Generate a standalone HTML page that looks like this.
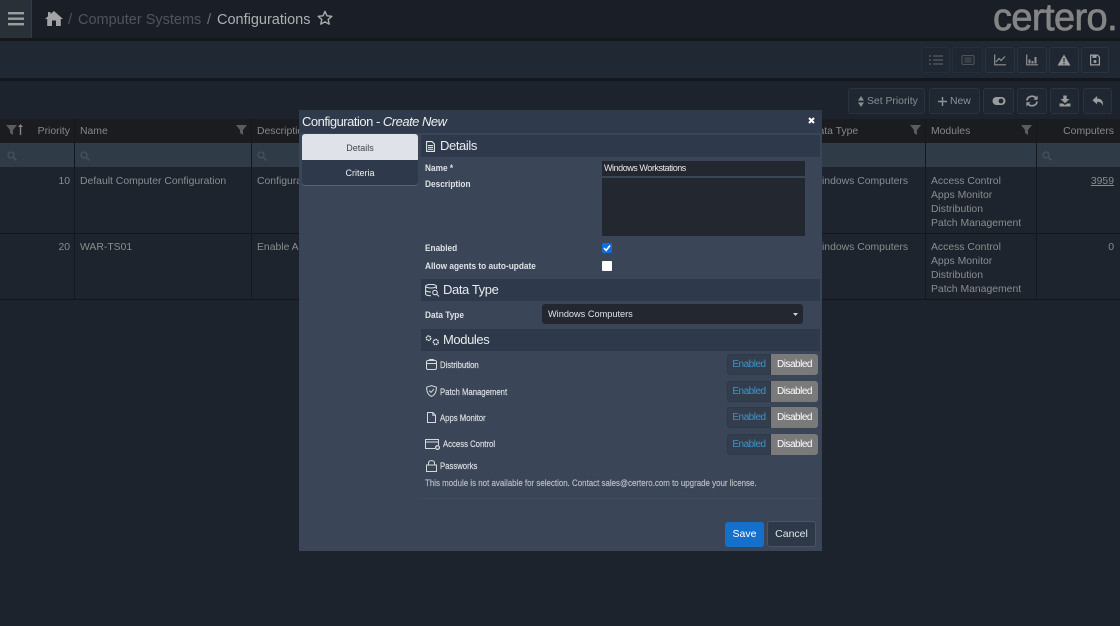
<!DOCTYPE html>
<html><head><meta charset="utf-8"><style>
html,body{margin:0;padding:0}
body{width:1120px;height:626px;overflow:hidden;background:#1c232c;font-family:"Liberation Sans",sans-serif;position:relative;color:#8a8d90}
.a,.t{position:absolute}
.t{white-space:nowrap;line-height:14px;font-size:10.4px}
.btn{position:absolute;box-sizing:border-box;border:1px solid #2a333e;border-radius:3px;background:#1f2832;height:26px}
.btn svg{position:absolute;left:50%;top:50%;transform:translate(-50%,-50%)}
.l{position:absolute;background:#14181d}
.lab{position:absolute;white-space:nowrap;font:bold 9px/12px "Liberation Sans",sans-serif;color:#dfe2e6;transform:scaleX(.92);transform-origin:0 0}
.mod{position:absolute;white-space:nowrap;font:9px/12px "Liberation Sans",sans-serif;color:#d8dce0;transform:scaleX(.86);transform-origin:0 0;-webkit-text-stroke:.2px #d8dce0}
.sec{position:absolute;left:421px;width:399px;height:22px;background:#2e3a4b}
.st{position:absolute;font-size:13px;line-height:20px;color:#e8eaec;white-space:nowrap;letter-spacing:-.4px}
.tg{position:absolute;left:727px;width:91px;height:21px;box-sizing:border-box}
.tg b{position:absolute;left:0;top:0;width:44px;height:21px;box-sizing:border-box;background:#323e4e;border:1px solid #2d3848;border-radius:3px 0 0 3px;color:#3f93c8;font:10px/19px "Liberation Sans",sans-serif;letter-spacing:-.5px;text-align:center}
.tg i{position:absolute;left:44px;top:0;width:47px;height:21px;background:#7a7a7a;border-radius:0 3px 3px 0;color:#fff;font:normal 10px/21px "Liberation Sans",sans-serif;letter-spacing:-.5px;text-align:center}
</style></head><body>
<!-- top bar -->
<div class="a" style="left:0;top:0;width:1120px;height:38px;background:#1a1f27"></div>
<div class="a" style="left:0;top:38px;width:1120px;height:3px;background:#14171c"></div>
<div class="a" style="left:0;top:0;width:32px;height:38px;background:#2a3038;border-right:1px solid #333a43;box-sizing:border-box"></div>
<svg class="a" style="left:8px;top:12px" width="16" height="14"><rect y="0" width="16" height="2.4" fill="#9b9d9f"/><rect y="5.5" width="16" height="2.4" fill="#9b9d9f"/><rect y="11" width="16" height="2.4" fill="#9b9d9f"/></svg>
<svg class="a" style="left:45px;top:11px" width="18" height="15" viewBox="0 0 18 15"><path d="M9 0 L18 8 L15.8 8 L15.8 15 L11 15 L11 9.5 L7 9.5 L7 15 L2.2 15 L2.2 8 L0 8 L3 5.2 L3 1 L5.5 1 L5.5 3 Z" fill="#a2a3a4"/></svg>
<div class="t" style="left:68px;top:12px;font-size:15px;line-height:16px;color:#4f545b">/</div>
<div class="t" style="left:78px;top:12px;font-size:14.5px;line-height:16px;color:#4f555c">Computer Systems</div>
<div class="t" style="left:207px;top:12px;font-size:15px;line-height:16px;color:#6b6f74">/</div>
<div class="t" style="left:217px;top:12px;font-size:14.5px;line-height:16px;color:#adb0b3">Configurations</div>
<svg class="a" style="left:317px;top:10px" width="16" height="16" viewBox="0 0 16 16"><path d="M8 1.4 L10 5.8 L14.8 6.3 L11.2 9.5 L12.2 14.2 L8 11.8 L3.8 14.2 L4.8 9.5 L1.2 6.3 L6 5.8 Z" fill="none" stroke="#a9abad" stroke-width="1.4" stroke-linejoin="round"/></svg>
<div class="t" style="left:993px;top:0;font-size:38px;line-height:37px;color:#848484;letter-spacing:-.6px;font-weight:400;-webkit-text-stroke:.7px #848484">certero.</div>

<!-- toolbar 1 -->
<div class="a" style="left:0;top:41px;width:1120px;height:37px;background:#1f2833"></div>
<div class="a" style="left:0;top:78px;width:1120px;height:3px;background:#14181d"></div>
<div class="btn" style="left:921px;top:47px;width:29px;opacity:.55"><svg width="14" height="10"><path d="M0 1h2M4 1h10M0 5h2M4 5h10M0 9h2M4 9h10" stroke="#777" stroke-width="1.6"/></svg></div>
<div class="btn" style="left:952px;top:47px;width:31px;opacity:.55"><svg width="13" height="10"><rect x=".5" y=".5" width="12" height="9" rx="1.5" fill="none" stroke="#777"/><path d="M3 3h7M3 5h7M3 7h7" stroke="#777"/></svg></div>
<div class="btn" style="left:985px;top:47px;width:30px"><svg width="12" height="11"><path d="M.7 0V10.3H12" fill="none" stroke="#8e8f90" stroke-width="1.2"/><path d="M2 7.5L5 4L7 6L11 2" fill="none" stroke="#8e8f90" stroke-width="1.2"/></svg></div>
<div class="btn" style="left:1017px;top:47px;width:30px"><svg width="12" height="11"><path d="M.7 0V10.3H12" fill="none" stroke="#8e8f90" stroke-width="1.2"/><path d="M2.5 9V5h2v4zM5.5 9V6.5h2V9zM8.5 9V2.5h2V9z" fill="#8e8f90"/></svg></div>
<div class="btn" style="left:1049px;top:47px;width:30px"><svg width="13" height="11"><path d="M6.5 0L13 11H0Z" fill="#9c9d9e"/><path d="M6.5 3.5V7.5M6.5 8.5V10" stroke="#1f2832" stroke-width="1.1"/></svg></div>
<div class="btn" style="left:1081px;top:47px;width:28px"><svg width="10" height="11"><path d="M.6.6H7.5L9.4 2.5V10.4H.6Z" fill="none" stroke="#a0a1a2" stroke-width="1.2"/><rect x="2.5" y="1" width="4" height="2.4" fill="#a0a1a2"/><circle cx="5" cy="7" r="1.5" fill="#a0a1a2"/></svg></div>

<!-- toolbar 2 -->
<div class="btn" style="left:848px;top:88px;width:77px;height:26px"></div>
<svg class="a" style="left:858px;top:96px" width="6" height="11"><path d="M3 0L6 4.6H0ZM3 11L6 6.4H0Z" fill="#8b8d90"/></svg>
<div class="t" style="left:867px;top:95px;color:#8b8d90">Set Priority</div>
<div class="btn" style="left:929px;top:88px;width:51px"></div>
<svg class="a" style="left:938px;top:97px" width="9" height="9"><path d="M4.5 0V9M0 4.5H9" stroke="#8f9194" stroke-width="1.4"/></svg>
<div class="t" style="left:950px;top:95px;color:#8f9194">New</div>
<div class="btn" style="left:983px;top:88px;width:31px"><svg width="13" height="8"><rect width="13" height="8" rx="4" fill="#9b9c9d"/><circle cx="8.5" cy="4" r="2.4" fill="#1f2832"/></svg></div>
<div class="btn" style="left:1017px;top:88px;width:30px"><svg width="12" height="11"><path d="M1 5A5 4.5 0 0 1 10 2.5M11 6A5 4.5 0 0 1 2 8.5" fill="none" stroke="#9b9c9d" stroke-width="1.7"/><path d="M11.6 0V4.2H7.5ZM.4 11V6.8H4.5Z" fill="#9b9c9d"/></svg></div>
<div class="btn" style="left:1050px;top:88px;width:29px"><svg width="11" height="11"><path d="M3.8 0H7.2V3.5H10L5.5 7.8L1 3.5H3.8ZM0 8H3.4L5.5 9.6L7.6 8H11V11H0Z" fill="#9b9c9d"/></svg></div>
<div class="btn" style="left:1083px;top:88px;width:29px"><svg width="11" height="10"><path d="M4.6 0V2.5C8.5 2.5 11 4.5 10.5 10C9.5 7 8 5.9 4.6 5.9V8.4L0 4.2Z" fill="#9b9c9d"/></svg></div>

<!-- table -->
<div class="a" style="left:0;top:119px;width:1120px;height:24px;background:#1a1c20"></div>
<div class="a" style="left:0;top:143px;width:1120px;height:24px;background:#303b48"></div>
<div class="a" style="left:0;top:167px;width:1120px;height:133px;background:#1d242d"></div>
<div class="l" style="left:0;top:233px;width:1120px;height:1px;background:#12161b"></div>
<div class="l" style="left:0;top:299px;width:1120px;height:1px;background:#12161b"></div>
<div class="l" style="left:74px;top:119px;width:1px;height:181px"></div>
<div class="l" style="left:251px;top:119px;width:1px;height:181px"></div>
<div class="l" style="left:925px;top:119px;width:1px;height:181px"></div>
<div class="l" style="left:1036px;top:119px;width:1px;height:181px"></div>

<svg class="a" style="left:6px;top:125px" width="11" height="10"><path d="M0 0H11L7 5V10L4 8V5Z" fill="#5a5c5e"/></svg>
<svg class="a" style="left:18px;top:124px" width="5" height="11"><path d="M2.5 0L5 3H3.2V11H1.8V3H0Z" fill="#8b8080"/></svg>
<div class="t" style="right:1050px;top:125px;color:#85888b">Priority</div>
<div class="t" style="left:80px;top:125px;color:#85888b">Name</div>
<svg class="a" style="left:236px;top:125px" width="11" height="10"><path d="M0 0H11L7 5V10L4 8V5Z" fill="#5a5c5e"/></svg>
<div class="t" style="left:257px;top:125px;color:#85888b">Description</div>
<div class="t" style="left:811px;top:125px;color:#85888b">Data Type</div>
<svg class="a" style="left:910px;top:125px" width="11" height="10"><path d="M0 0H11L7 5V10L4 8V5Z" fill="#5a5c5e"/></svg>
<div class="t" style="left:931px;top:125px;color:#85888b">Modules</div>
<svg class="a" style="left:1021px;top:125px" width="11" height="10"><path d="M0 0H11L7 5V10L4 8V5Z" fill="#5a5c5e"/></svg>
<div class="t" style="right:6px;top:125px;color:#85888b">Computers</div>

<svg class="a" style="left:7px;top:151px" width="10" height="10"><circle cx="4" cy="4" r="3" fill="none" stroke="#46515e" stroke-width="1.3"/><path d="M6.2 6.2L9.3 9.3" stroke="#46515e" stroke-width="1.6"/></svg>
<svg class="a" style="left:80px;top:151px" width="10" height="10"><circle cx="4" cy="4" r="3" fill="none" stroke="#46515e" stroke-width="1.3"/><path d="M6.2 6.2L9.3 9.3" stroke="#46515e" stroke-width="1.6"/></svg>
<svg class="a" style="left:257px;top:151px" width="10" height="10"><circle cx="4" cy="4" r="3" fill="none" stroke="#46515e" stroke-width="1.3"/><path d="M6.2 6.2L9.3 9.3" stroke="#46515e" stroke-width="1.6"/></svg>
<svg class="a" style="left:1042px;top:151px" width="10" height="10"><circle cx="4" cy="4" r="3" fill="none" stroke="#46515e" stroke-width="1.3"/><path d="M6.2 6.2L9.3 9.3" stroke="#46515e" stroke-width="1.6"/></svg>

<div class="t" style="right:1050px;top:175px">10</div>
<div class="t" style="left:80px;top:175px">Default Computer Configuration</div>
<div class="t" style="left:257px;top:175px">Configuration</div>
<div class="t" style="left:822px;top:175px">indows Computers</div>
<div class="t" style="left:931px;top:175px;white-space:pre">Access Control
Apps Monitor
Distribution
Patch Management</div>
<div class="t" style="right:6px;top:175px;text-decoration:underline">3959</div>
<div class="t" style="right:1050px;top:241px">20</div>
<div class="t" style="left:80px;top:241px">WAR-TS01</div>
<div class="t" style="left:257px;top:241px">Enable Apps</div>
<div class="t" style="left:822px;top:241px">indows Computers</div>
<div class="t" style="left:931px;top:241px;white-space:pre">Access Control
Apps Monitor
Distribution
Patch Management</div>
<div class="t" style="right:6px;top:241px">0</div>

<!-- modal -->
<div class="a" style="left:299px;top:110px;width:523px;height:441px;background:#3a4657"></div>
<div class="a" style="left:299px;top:110px;width:523px;height:23px;background:#2f3b4c"></div>
<div class="t" style="left:302px;top:114px;font-size:13px;line-height:15px;color:#eceef0;letter-spacing:-.5px">Configuration - <em>Create New</em></div>
<svg class="a" style="left:808px;top:117px" width="7" height="7"><path d="M1 1L6 6M6 1L1 6" stroke="#fff" stroke-width="2"/></svg>

<div class="a" style="left:302px;top:134px;width:116px;height:51px;background:#2e3a4b;border-radius:3px;box-shadow:0 1px 0 #586375"></div>
<div class="a" style="left:302px;top:134px;width:116px;height:26px;background:#dfe2e8;border-radius:3px 3px 0 0"></div>
<div class="t" style="left:302px;top:141px;width:116px;text-align:center;font-size:9px;line-height:14px;color:#40474f">Details</div>
<div class="t" style="left:302px;top:166px;width:116px;text-align:center;font-size:9px;line-height:14px;color:#eef0f2">Criteria</div>

<!-- details -->
<div class="sec" style="top:135px"></div>
<svg class="a" style="left:426px;top:141px" width="9" height="11"><path d="M.6.6H6L8.4 3V10.4H.6Z" fill="none" stroke="#e4e6e8" stroke-width="1.1"/><path d="M2 4.5H7M2 6.4H7M2 8.3H7" stroke="#e4e6e8"/></svg>
<div class="st" style="left:440px;top:136px">Details</div>
<div class="lab" style="left:425px;top:162px">Name *</div>
<div class="lab" style="left:425px;top:178px">Description</div>
<div class="lab" style="left:425px;top:242px">Enabled</div>
<div class="lab" style="left:425px;top:260px">Allow agents to auto-update</div>
<div class="a" style="left:602px;top:161px;width:203px;height:15px;background:#232830"></div>
<div class="t" style="left:604px;top:162px;font-size:9px;line-height:13px;color:#e6e8ea;letter-spacing:-.45px">Windows Workstations</div>
<div class="a" style="left:602px;top:178px;width:203px;height:58px;background:#232830"></div>
<div class="a" style="left:602px;top:243px;width:10px;height:10px;background:#0f6fe0;border-radius:2px"></div>
<svg class="a" style="left:603px;top:244px" width="8" height="8"><path d="M1 4L3.2 6.4L7 1.5" fill="none" stroke="#fff" stroke-width="1.6"/></svg>
<div class="a" style="left:602px;top:261px;width:10px;height:10px;background:#fff;border-radius:1px"></div>

<!-- data type -->
<div class="sec" style="top:279px"></div>
<svg class="a" style="left:425px;top:284px" width="15" height="13" fill="none" stroke="#e4e6e8"><ellipse cx="6" cy="2.2" rx="5.4" ry="1.8"/><path d="M.6 2.2V10C.6 11 3 11.8 6 11.8M.6 6.2C.6 7.2 3 8 6 8M11.4 2.2V5"/><circle cx="10" cy="8.5" r="2.3"/><path d="M11.7 10.2L14 12.5"/></svg>
<div class="st" style="left:443px;top:280px">Data Type</div>
<div class="lab" style="left:425px;top:309px">Data Type</div>
<div class="a" style="left:542px;top:304px;width:261px;height:20px;background:#232830;border-radius:3px"></div>
<div class="t" style="left:548px;top:307px;font-size:9.2px;color:#dfe1e3">Windows Computers</div>
<svg class="a" style="left:793px;top:313px" width="5" height="3"><path d="M0 0H5L2.5 3Z" fill="#d0d2d4"/></svg>

<!-- modules -->
<div class="sec" style="top:329px"></div>
<svg class="a" style="left:425px;top:335px" width="15" height="11" fill="none" stroke="#e4e6e8"><circle cx="3.5" cy="3.2" r="2.2" stroke-width="1.4" stroke-dasharray="1.6 .6"/><circle cx="10.8" cy="7" r="2.5" stroke-width="1.4" stroke-dasharray="1.6 .6"/></svg>
<div class="st" style="left:443px;top:330px">Modules</div>

<svg class="a" style="left:426px;top:359px" width="11" height="11" fill="none" stroke="#d6d9dc"><rect x=".5" y="1.5" width="10" height="9" rx="1.5"/><path d="M.5 4.5H10.5M3 1.5L3.5 .5H7.5L8 1.5"/></svg>
<div class="mod" style="left:440px;top:359px">Distribution</div>
<svg class="a" style="left:426px;top:385px" width="11" height="12" fill="none" stroke="#d6d9dc"><path d="M5.5 .6L10.4 2.2C10.4 7 9 10 5.5 11.4C2 10 .6 7 .6 2.2Z"/><path d="M3.3 5.6L5 7.4L7.8 4.2"/></svg>
<div class="mod" style="left:440px;top:386px">Patch Management</div>
<svg class="a" style="left:427px;top:412px" width="9" height="11" fill="none" stroke="#d6d9dc"><path d="M.5.5H5.8L8.5 3.2V10.5H.5ZM5.8.5V3.2H8.5"/></svg>
<div class="mod" style="left:440px;top:412px">Apps Monitor</div>
<svg class="a" style="left:425px;top:438px" width="16" height="12" fill="none" stroke="#d6d9dc"><path d="M10 10.5H.5V1.5H13.5V7M.5 4H13.5"/><circle cx="12.5" cy="9.5" r="1.9" stroke-width="1.3"/></svg>
<div class="mod" style="left:443px;top:438px">Access Control</div>
<svg class="a" style="left:426px;top:460px" width="11" height="12" fill="none" stroke="#d6d9dc"><rect x=".5" y="5" width="10" height="6.5"/><path d="M2.5 5V3.2C2.5 1.5 3.8.6 5.5.6S8.5 1.5 8.5 3.2V5"/></svg>
<div class="mod" style="left:440px;top:460px">Passworks</div>
<div class="lab" style="left:425px;top:477px;color:#b6bbc1;font-weight:400;transform:scaleX(.88);-webkit-text-stroke:.2px #b6bbc1">This module is not available for selection. Contact sales@certero.com to upgrade your license.</div>

<div class="tg" style="top:354px"><b>Enabled</b><i>Disabled</i></div>
<div class="tg" style="top:381px"><b>Enabled</b><i>Disabled</i></div>
<div class="tg" style="top:407px"><b>Enabled</b><i>Disabled</i></div>
<div class="tg" style="top:434px"><b>Enabled</b><i>Disabled</i></div>

<div class="a" style="left:421px;top:498px;width:399px;height:1px;background:#414d5e"></div>
<div class="a" style="left:725px;top:522px;width:39px;height:25px;background:#1570cc;border-radius:3px;color:#fff;font-size:10.5px;line-height:25px;text-align:center">Save</div>
<div class="a" style="left:767px;top:521px;width:49px;height:26px;box-sizing:border-box;background:#2d3949;border:1px solid #4a5564;border-radius:3px;color:#e4e6e8;font-size:10.5px;line-height:25px;text-align:center">Cancel</div>
</body></html>
